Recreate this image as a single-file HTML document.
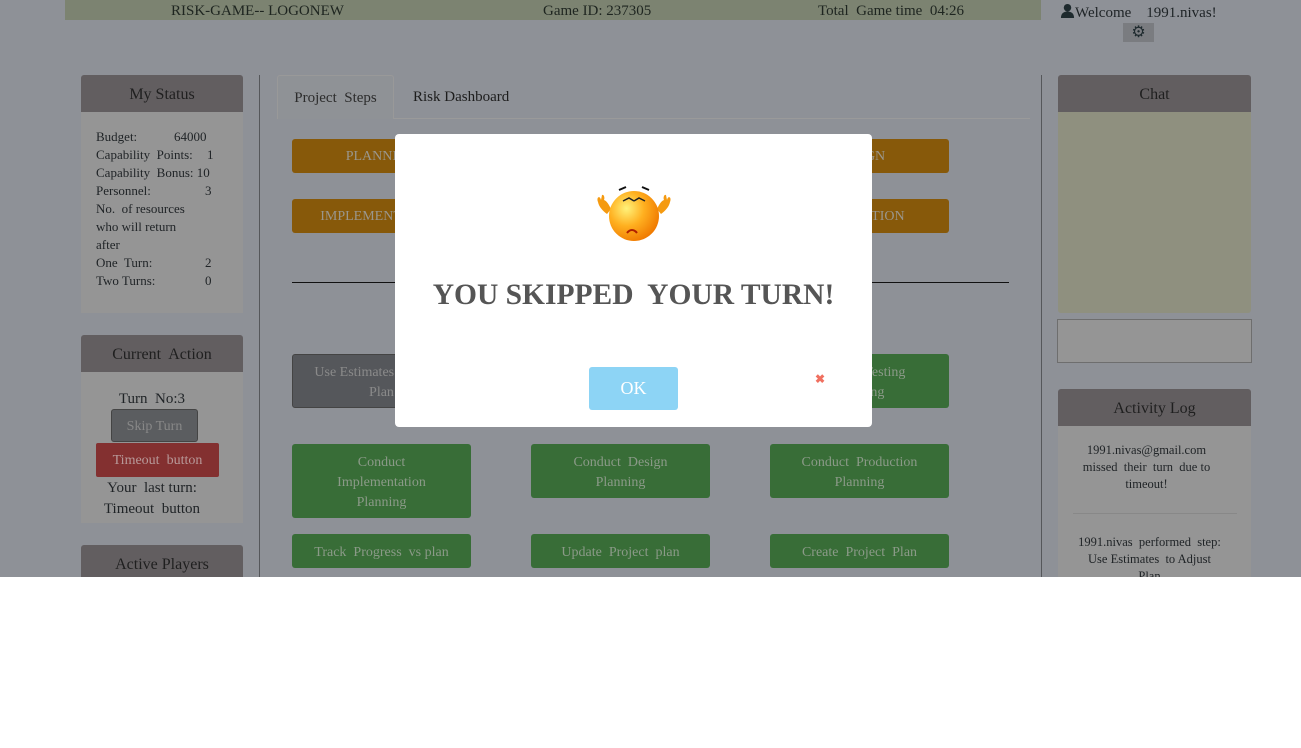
<!DOCTYPE html>
<html><head><meta charset="utf-8"><style>
*{box-sizing:border-box;margin:0;padding:0}
body{width:1301px;height:748px;background:#fff;font-family:"Liberation Serif",serif;position:relative;overflow:hidden}
.pg{position:absolute;left:0;top:0;width:1301px;height:577px;background:#8e9197;overflow:hidden}
.abs{position:absolute}
.top{left:65px;top:0;width:976px;height:20px;background:#7c8371;color:#1e2520;font-size:15px;line-height:23px}
.ph{background:#625e60;color:#1f1f1f;font-size:16px;text-align:center;line-height:40px;border-radius:3px 3px 0 0}
.pb{background:#959595}
.ob{background:#87590a;color:#9a968c;font-size:14px;text-align:center;border-radius:3px;line-height:35px}
.gb{background:#386d37;color:#8b9a88;font-size:14px;text-align:center;border-radius:3px;line-height:20px;display:flex;align-items:center;justify-content:center;padding-top:3px}
.st{font-size:13px;color:#1f2326;line-height:18px}
</style></head><body>
<div class="pg">
<div class="abs top"><span class="abs" style="left:106px">RISK-GAME-- LOGONEW</span><span class="abs" style="left:478px">Game ID: 237305</span><span class="abs" style="left:753px">Total&nbsp; Game time&nbsp; 04:26</span></div>
<div class="abs" style="left:1060px;top:3px;font-size:15px;color:#1e2326">
<svg width="15" height="15" viewBox="0 0 16 16" style="vertical-align:-1px"><circle cx="8" cy="5" r="4" fill="#1e2a2e"/><path d="M1 16c0-5 3-7 7-7s7 2 7 7z" fill="#1e2a2e"/></svg>Welcome &nbsp;&nbsp; 1991.nivas!</div>
<div class="abs" style="left:1123px;top:23px;width:31px;height:19px;background:#7a7c80;text-align:center;font-size:16px;line-height:19px;color:#1e2a2e">⚙</div>
<div class="abs" style="left:259px;top:75px;width:1px;height:502px;background:#55575a"></div>
<div class="abs" style="left:1041px;top:75px;width:1px;height:502px;background:#55575a"></div>
<!-- left -->
<div class="abs ph" style="left:81px;top:75px;width:162px;height:37px">My Status</div>
<div class="abs pb st" style="left:81px;top:112px;width:162px;height:201px;padding:16px 0 0 15px">
<div>Budget:<span class="abs" style="left:93px">64000</span></div>
<div>Capability&nbsp; Points:<span class="abs" style="left:126px">1</span></div>
<div>Capability&nbsp; Bonus: 10</div>
<div>Personnel:<span class="abs" style="left:124px">3</span></div>
<div>No.&nbsp; of resources</div><div>who will return</div><div>after</div>
<div>One&nbsp; Turn:<span class="abs" style="left:124px">2</span></div>
<div>Two Turns:<span class="abs" style="left:124px">0</span></div></div>
<div class="abs ph" style="left:81px;top:335px;width:162px;height:37px">Current&nbsp; Action</div>
<div class="abs pb" style="left:81px;top:372px;width:162px;height:151px;text-align:center;font-size:15px;color:#1f2326">
<div style="margin-top:19px;padding-right:20px">Turn&nbsp; No:3</div>
<div class="abs" style="left:30px;top:37px;width:87px;height:33px;background:#5b5d60;border:1px solid #444;border-radius:3px;color:#888;font-size:14px;line-height:33px">Skip Turn</div>
<div class="abs" style="left:15px;top:71px;width:123px;height:34px;background:#833030;border-radius:2px;color:#b89a9a;font-size:14px;line-height:36px">Timeout&nbsp; button</div>
<div class="abs" style="left:0;top:106px;width:142px;line-height:21px">Your&nbsp; last turn:<br>Timeout&nbsp; button</div></div>
<div class="abs ph" style="left:81px;top:545px;width:162px;height:37px">Active Players</div>
<!-- center -->
<div class="abs" style="left:277px;top:75px;width:117px;height:44px;background:#8f9296;border:1px solid #999;border-bottom:none;border-radius:3px 3px 0 0;font-size:15px;color:#2c2c2c;line-height:44px;text-align:center">Project&nbsp; Steps</div>
<div class="abs" style="left:413px;top:89px;font-size:15px;color:#1d1d1d">Risk Dashboard</div>
<div class="abs" style="left:394px;top:118px;width:636px;height:1px;background:#9a9a9a"></div>
<div class="abs ob" style="left:292px;top:139px;width:179px;height:34px">PLANNING</div>
<div class="abs ob" style="left:770px;top:139px;width:179px;height:34px">DESIGN</div>
<div class="abs ob" style="left:292px;top:199px;width:179px;height:34px">IMPLEMENTATION</div>
<div class="abs ob" style="left:770px;top:199px;width:179px;height:34px">PRODUCTION</div>
<div class="abs" style="left:292px;top:282px;width:717px;height:1px;background:#111"></div>
<div class="abs gb" style="left:292px;top:354px;width:179px;height:54px;background:#55575b;color:#8a8a8a;border:1px solid #444">Use Estimates to Adjust<br>Plan</div>
<div class="abs gb" style="left:770px;top:354px;width:179px;height:54px">Conduct Testing<br>Planning</div>
<div class="abs gb" style="left:292px;top:444px;width:179px;height:74px">Conduct<br>Implementation<br>Planning</div>
<div class="abs gb" style="left:531px;top:444px;width:179px;height:54px">Conduct&nbsp; Design<br>Planning</div>
<div class="abs gb" style="left:770px;top:444px;width:179px;height:54px">Conduct&nbsp; Production<br>Planning</div>
<div class="abs gb" style="left:292px;top:534px;width:179px;height:34px">Track&nbsp; Progress&nbsp; vs plan</div>
<div class="abs gb" style="left:531px;top:534px;width:179px;height:34px">Update&nbsp; Project&nbsp; plan</div>
<div class="abs gb" style="left:770px;top:534px;width:179px;height:34px">Create&nbsp; Project&nbsp; Plan</div>
<!-- right -->
<div class="abs ph" style="left:1058px;top:75px;width:193px;height:37px">Chat</div>
<div class="abs" style="left:1058px;top:112px;width:193px;height:201px;background:#8f907f;border-radius:0 0 3px 3px"></div>
<div class="abs" style="left:1057px;top:319px;width:195px;height:44px;background:#959595;border:1px solid #6e6e6e"></div>
<div class="abs ph" style="left:1058px;top:389px;width:193px;height:37px">Activity Log</div>
<div class="abs pb" style="left:1058px;top:426px;width:193px;height:151px;text-align:center;font-size:12.5px;color:#1f2326;line-height:17px">
<div style="padding:16px 16px 0 0">1991.nivas@gmail.com<br>missed&nbsp; their&nbsp; turn&nbsp; due to<br>timeout!</div>
<div style="margin:20px 14px 0 15px;height:1px;background:#888"></div>
<div style="padding:20px 10px 0 0">1991.nivas&nbsp; performed&nbsp; step:<br>Use Estimates&nbsp; to Adjust<br>Plan</div></div>
</div>
<!-- modal -->
<div class="abs" style="left:395px;top:134px;width:477px;height:293px;background:#fff;border-radius:4px">
<svg class="abs" style="left:199px;top:50px" width="80" height="60" viewBox="0 0 78 60">
<defs><radialGradient id="g" cx="35%" cy="35%" r="70%"><stop offset="0" stop-color="#fff27a"/><stop offset=".5" stop-color="#ffb020"/><stop offset="1" stop-color="#f07a00"/></radialGradient></defs>
<path d="M3 18c-2-5 2-7 3-2l1-5c2-1 3 3 2 5 3 1 5 5 7 9l-4 5c-4-3-8-7-9-12z" fill="#f59a10"/>
<path d="M75 18c2-5-2-7-3-2l-1-5c-2-1-3 3-2 5-3 1-5 5-7 9l4 5c4-3 8-7 9-12z" fill="#f59a10"/>
<circle cx="39" cy="32" r="25" fill="url(#g)"/>
<path d="M24 6l7-3M47 3l7 3" stroke="#111" stroke-width="2"/>
<path d="M28 17l6-3 5 3M39 17l5-3 6 3" stroke="#222" stroke-width="1.5" fill="none"/>
<path d="M32 49c3-4 7-4 10 0" stroke="#b02000" stroke-width="2" fill="none"/></svg>
<div class="abs" style="left:0;top:145px;width:477px;text-align:center;font-weight:bold;font-size:29.5px;color:#555">YOU SKIPPED&nbsp; YOUR TURN!</div>
<div class="abs" style="left:194px;top:233px;width:89px;height:43px;background:#8dd4f5;border-radius:3px;color:#fff;font-size:18px;text-align:center;line-height:43px">OK</div>
<div class="abs" style="left:420px;top:238px;color:#f07060;font-size:12px;font-weight:bold">✖</div>
</div>
</body></html>
